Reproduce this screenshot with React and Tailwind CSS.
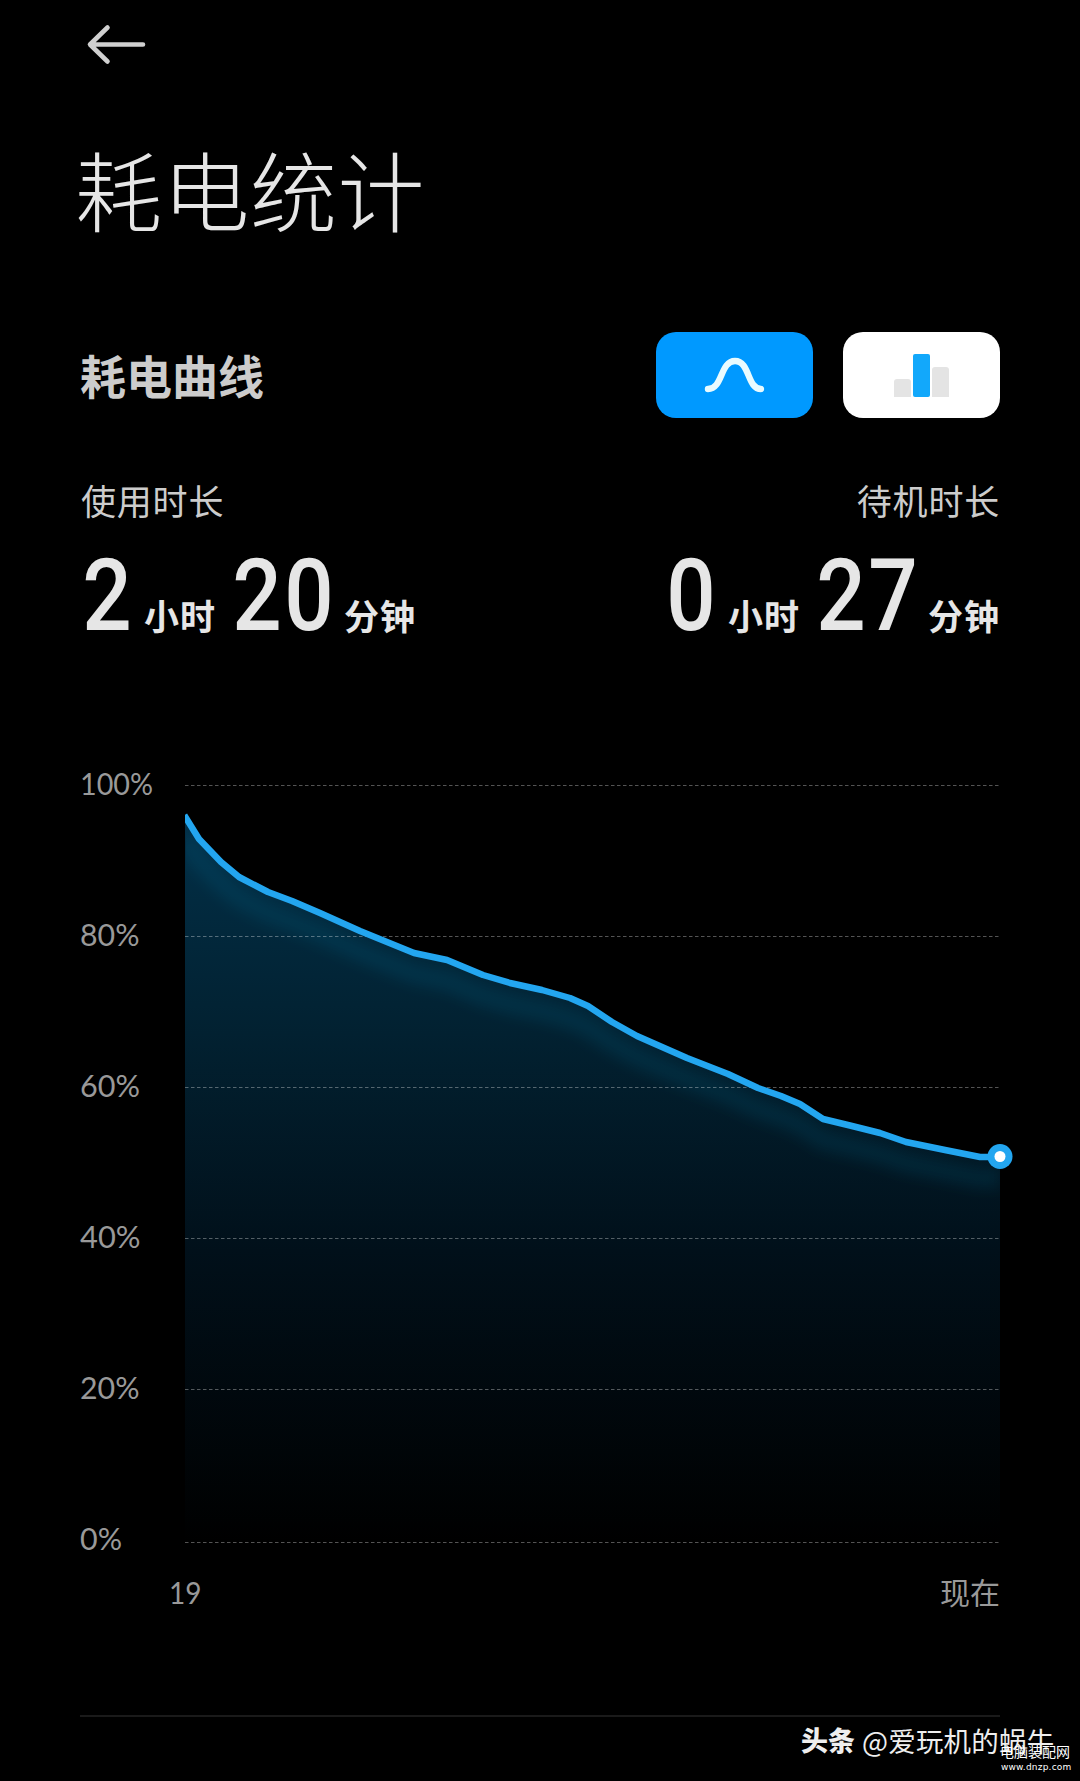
const CJK = "font-['Noto_Sans_CJK_SC',sans-serif]";

const LINE =
  "186,818 199,839 221,862 239,877 268,892 292,901 320,913 360,931 414,953 447,960 483,975 510,983 542,990 570,998 588,1006 612,1022 637,1036 687,1058 728,1074 758,1088 781,1096 800,1104 823,1119 852,1126 880,1133 906,1142 945,1150 980,1157 1000,1157";

const GRID = [
  { y: 785, label: "100%", base: 795, width: 73 },
  { y: 936, label: "80%", base: 946, width: 59.5 },
  { y: 1087, label: "60%", base: 1097, width: 60 },
  { y: 1238, label: "40%", base: 1248, width: 60.5 },
  { y: 1389, label: "20%", base: 1399, width: 59.5 },
  { y: 1542, label: "0%", base: 1550, width: 42 },
];

function Duration({ hours, minutes }) {
  return (
    <div className="flex items-baseline text-[#e6e6e6]">
      <Digits value={hours} />
      <span className="ml-[13px] mr-[14px] text-[35px] font-bold tracking-[1px]">小时</span>
      <Digits value={minutes} />
      <span className="ml-[12px] text-[35px] font-bold tracking-[1px]">分钟</span>
    </div>
  );
}

function Digits({ value }) {
  const w = value.length * 51;
  return (
    <svg width={w} height="72" viewBox={`0 0 ${w} 72`} className="overflow-visible">
      <text x="2.600" y="72" transform="scale(0.87 1)" fill="#e6e6e6" className="font-[Roboto] text-[100px] font-medium tracking-[3px]">
        {value}
      </text>
    </svg>
  );
}

function Chart() {
  return (
    <svg width="1080" height="960" viewBox="0 670 1080 960" className="block">
      <defs>
        <linearGradient id="area" x1="0" y1="815" x2="0" y2="1542" gradientUnits="userSpaceOnUse">
          <stop offset="0" stopColor="#023048" />
          <stop offset="0.3" stopColor="#022131" />
          <stop offset="0.6" stopColor="#01101a" />
          <stop offset="1" stopColor="#000000" />
        </linearGradient>
        <filter id="soft" x="-10%" y="-10%" width="120%" height="130%">
          <feGaussianBlur stdDeviation="7" />
        </filter>
        <clipPath id="under">
          <polygon points={`${LINE} 1000,1542 185,1542`} />
        </clipPath>
        <clipPath id="plot">
          <rect x="185" y="780" width="820" height="770" />
        </clipPath>
      </defs>
      <polygon points={`185,818 ${LINE} 1000,1542 185,1542`} fill="url(#area)" />
      <g clipPath="url(#under)">
        <polyline points={LINE} transform="translate(0 21)" fill="none" stroke="#1487b4" strokeOpacity="0.13" strokeWidth="20" filter="url(#soft)" />
      </g>
      {GRID.map(({ y, label, base, width }) => (
        <g key={label}>
          <line x1="185" x2="999" y1={y + 0.5} y2={y + 0.5} stroke="#fff" strokeOpacity="0.33" strokeDasharray="3.500 2.500" />
          <text x="80" y={base} textLength={width} lengthAdjust="spacingAndGlyphs" fill="#999" className="font-[Lato] text-[31px]">
            {label}
          </text>
        </g>
      ))}
      <polyline points={LINE} fill="none" stroke="#23a6f0" strokeWidth="6.5" strokeLinejoin="round" strokeLinecap="square" clipPath="url(#plot)" />
      <circle cx="1000" cy="1156.5" r="12.5" fill="#23a6f0" />
      <circle cx="1000" cy="1156.5" r="5.5" fill="#fff" />
      <text x="169" y="1604" textLength="32.5" lengthAdjust="spacingAndGlyphs" fill="#999" className="font-[Lato] text-[31px]">19</text>
      <text x="940" y="1604" fill="#999" className={`${CJK} text-[30px]`}>现在</text>
    </svg>
  );
}

export default function App() {
  return (
    <div className="flex h-[1781px] w-[1080px] flex-col overflow-hidden bg-black font-['Noto_Sans_CJK_SC',sans-serif]">
      <header className="h-[332px] pl-[75px]">
        <svg width="80" height="90" viewBox="75 0 80 90" className="block" fill="none" stroke="#d0d0d0" strokeWidth="4.6" strokeLinecap="round" strokeLinejoin="round">
          <path d="M143 44.5H91M107.500 27.500L90 44.500L107.500 61.500" />
        </svg>
        <h1 className="h-[200px] text-[87px] font-light leading-[196px] tracking-[0.500px] text-[#e6e6e6]">耗电统计</h1>
      </header>

      <section className="flex h-[86px] items-center pl-[80px] pr-[80px]">
        <h2 className="flex-1 text-[46px] font-bold leading-[80px] text-[#ccc]"><span className="relative -top-px">耗电曲线</span></h2>
        <button className="mr-[30px] h-[86px] w-[157px] rounded-[20px] bg-[#0099ff]">
          <svg width="157" height="86" viewBox="0 0 157 86" fill="none" stroke="#e9fbff" strokeWidth="6.4" strokeLinecap="round">
            <path d="M52 57C67 57 64 29 79 29S91 57 105 57" />
          </svg>
        </button>
        <button className="flex h-[86px] w-[157px] items-end justify-center gap-[2px] rounded-[20px] bg-white pb-[21px]">
          <i className="h-[18px] w-[17px] rounded-t-[3px] bg-[#e4e4e4]" />
          <i className="h-[43px] w-[17px] rounded-[2px] bg-[#12a8fb]" />
          <i className="h-[30px] w-[17px] rounded-t-[3px] bg-[#e4e4e4]" />
        </button>
      </section>

      <section className="flex h-[252px] justify-between pl-[80px] pr-[80px] pt-[56px]">
        <div>
          <p className="h-[84px] pl-[1px] text-[35px] leading-[52px] tracking-[0.800px] text-[#ccc]">使用时长</p>
          <div className="h-[72px] leading-[72px]"><Duration hours="2" minutes="20" /></div>
        </div>
        <div className="flex flex-col items-end">
          <p className="h-[84px] text-[35px] leading-[52px] tracking-[0.800px] text-[#ccc]">待机时长</p>
          <div className="h-[72px] leading-[72px]"><Duration hours="0" minutes="27" /></div>
        </div>
      </section>

      <Chart />

      <footer className="relative mt-[85px] h-[66px]">
        <div className="ml-[80px] h-[2px] w-[920px] bg-[#1a1a1a]" />
        <div className="mt-[5px] flex items-center pl-[801px] text-[27px] leading-[36px] text-[#eee]">
          <span className="mr-[7px] font-black">头条</span>
          <span className="whitespace-nowrap text-[27.500px] tracking-[0.200px]">@爱玩机的蜗牛</span>
        </div>
        <div className="absolute left-[1000px] top-[27px] text-white">
          <div className="whitespace-nowrap text-[14px] leading-[18px]">电脑装配网</div>
          <div className="mt-px whitespace-nowrap pl-px font-['DejaVu_Sans'] text-[9px] leading-[12px] tracking-[0.200px]">www.dnzp.com</div>
        </div>
      </footer>
    </div>
  );
}
